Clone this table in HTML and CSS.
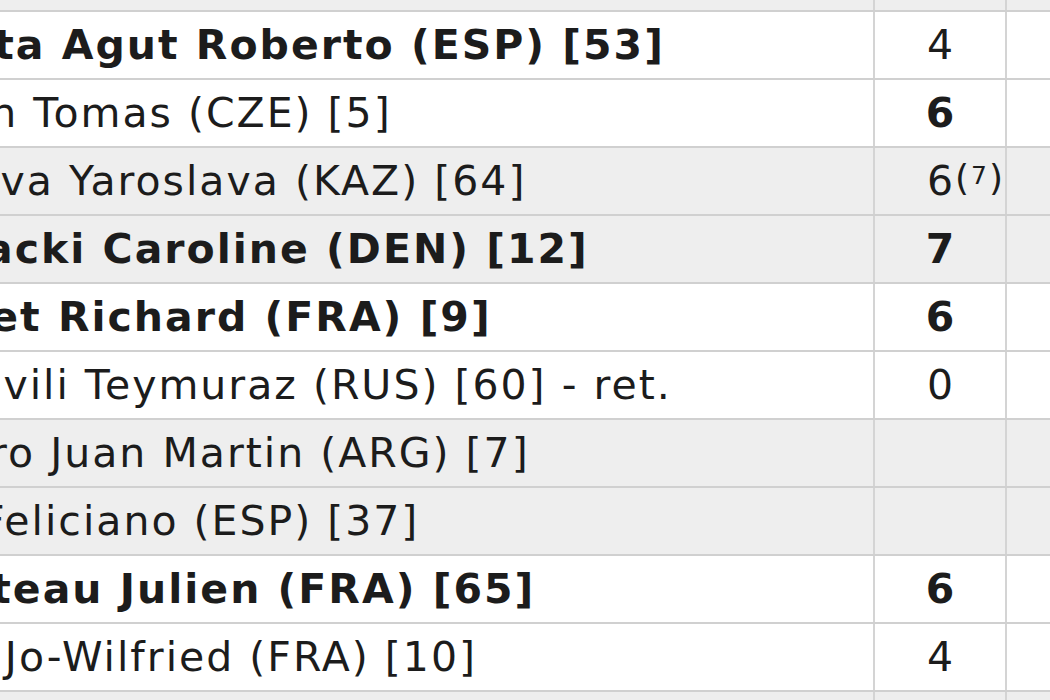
FILE: index.html
```html
<!DOCTYPE html>
<html>
<head>
<meta charset="utf-8">
<link rel="stylesheet" href="styles.css">
</head>
<body>
<div class="viewport">
  <div class="draw">
    <div class="row alt"><div class="name"></div><div class="score"></div><div class="extra"></div></div>
    <div class="row"><div class="name win">Bautista Agut Roberto (ESP) [53]</div><div class="score">4</div><div class="extra"></div></div>
    <div class="row"><div class="name">Berdych Tomas (CZE) [5]</div><div class="score win">6</div><div class="extra"></div></div>
    <div class="row alt"><div class="name">Shvedova Yaroslava (KAZ) [64]</div><div class="score">6<span class="tb">(<span class="tbd">7</span>)</span></div><div class="extra"></div></div>
    <div class="row alt"><div class="name win">Wozniacki Caroline (DEN) [12]</div><div class="score win">7</div><div class="extra"></div></div>
    <div class="row"><div class="name win">Gasquet Richard (FRA) [9]</div><div class="score win">6</div><div class="extra"></div></div>
    <div class="row"><div class="name">Gabashvili Teymuraz (RUS) [60] - ret.</div><div class="score">0</div><div class="extra"></div></div>
    <div class="row alt"><div class="name">del Potro Juan Martin (ARG) [7]</div><div class="score"></div><div class="extra"></div></div>
    <div class="row alt"><div class="name">Lopez Feliciano (ESP) [37]</div><div class="score"></div><div class="extra"></div></div>
    <div class="row"><div class="name win">Benneteau Julien (FRA) [65]</div><div class="score win">6</div><div class="extra"></div></div>
    <div class="row"><div class="name">Tsonga Jo-Wilfried (FRA) [10]</div><div class="score">4</div><div class="extra"></div></div>
    <div class="row alt"><div class="name"></div><div class="score"></div><div class="extra"></div></div>
  </div>
</div>
</body>
</html>
```

FILE: styles.css
```css
html, body {
  margin: 0;
  padding: 0;
  background: #ffffff;
}
.viewport {
  width: 1050px;
  height: 700px;
  overflow: hidden;
}
.draw {
  margin-top: -56px;
  margin-left: -164px;
  width: 1214px;
  font-family: "DejaVu Sans", Verdana, sans-serif;
  font-size: 41px;
  letter-spacing: 2px;
  color: #1c1c1c;
}
.row {
  display: grid;
  grid-template-columns: 1039px 132px 1fr;
  height: 68px;
  box-sizing: border-box;
  border-bottom: 2px solid #d0d0d0;
  background: #ffffff;
}
.row.alt {
  background: #eeeeee;
}
.name, .score, .extra {
  display: flex;
  align-items: center;
  white-space: nowrap;
  overflow: hidden;
}
.name {
  border-right: 2px solid #d4d4d4;
}
.score {
  justify-content: center;
  border-right: 2px solid #d4d4d4;
  letter-spacing: 0;
}
.win {
  font-weight: bold;
}
.tb {
  font-size: 36px;
  letter-spacing: 2px;
  margin-left: 2px;
  margin-right: -52px;
  position: relative;
  top: -4px;
}
.tbd {
  font-size: 25px;
  vertical-align: 6px;
}
```
